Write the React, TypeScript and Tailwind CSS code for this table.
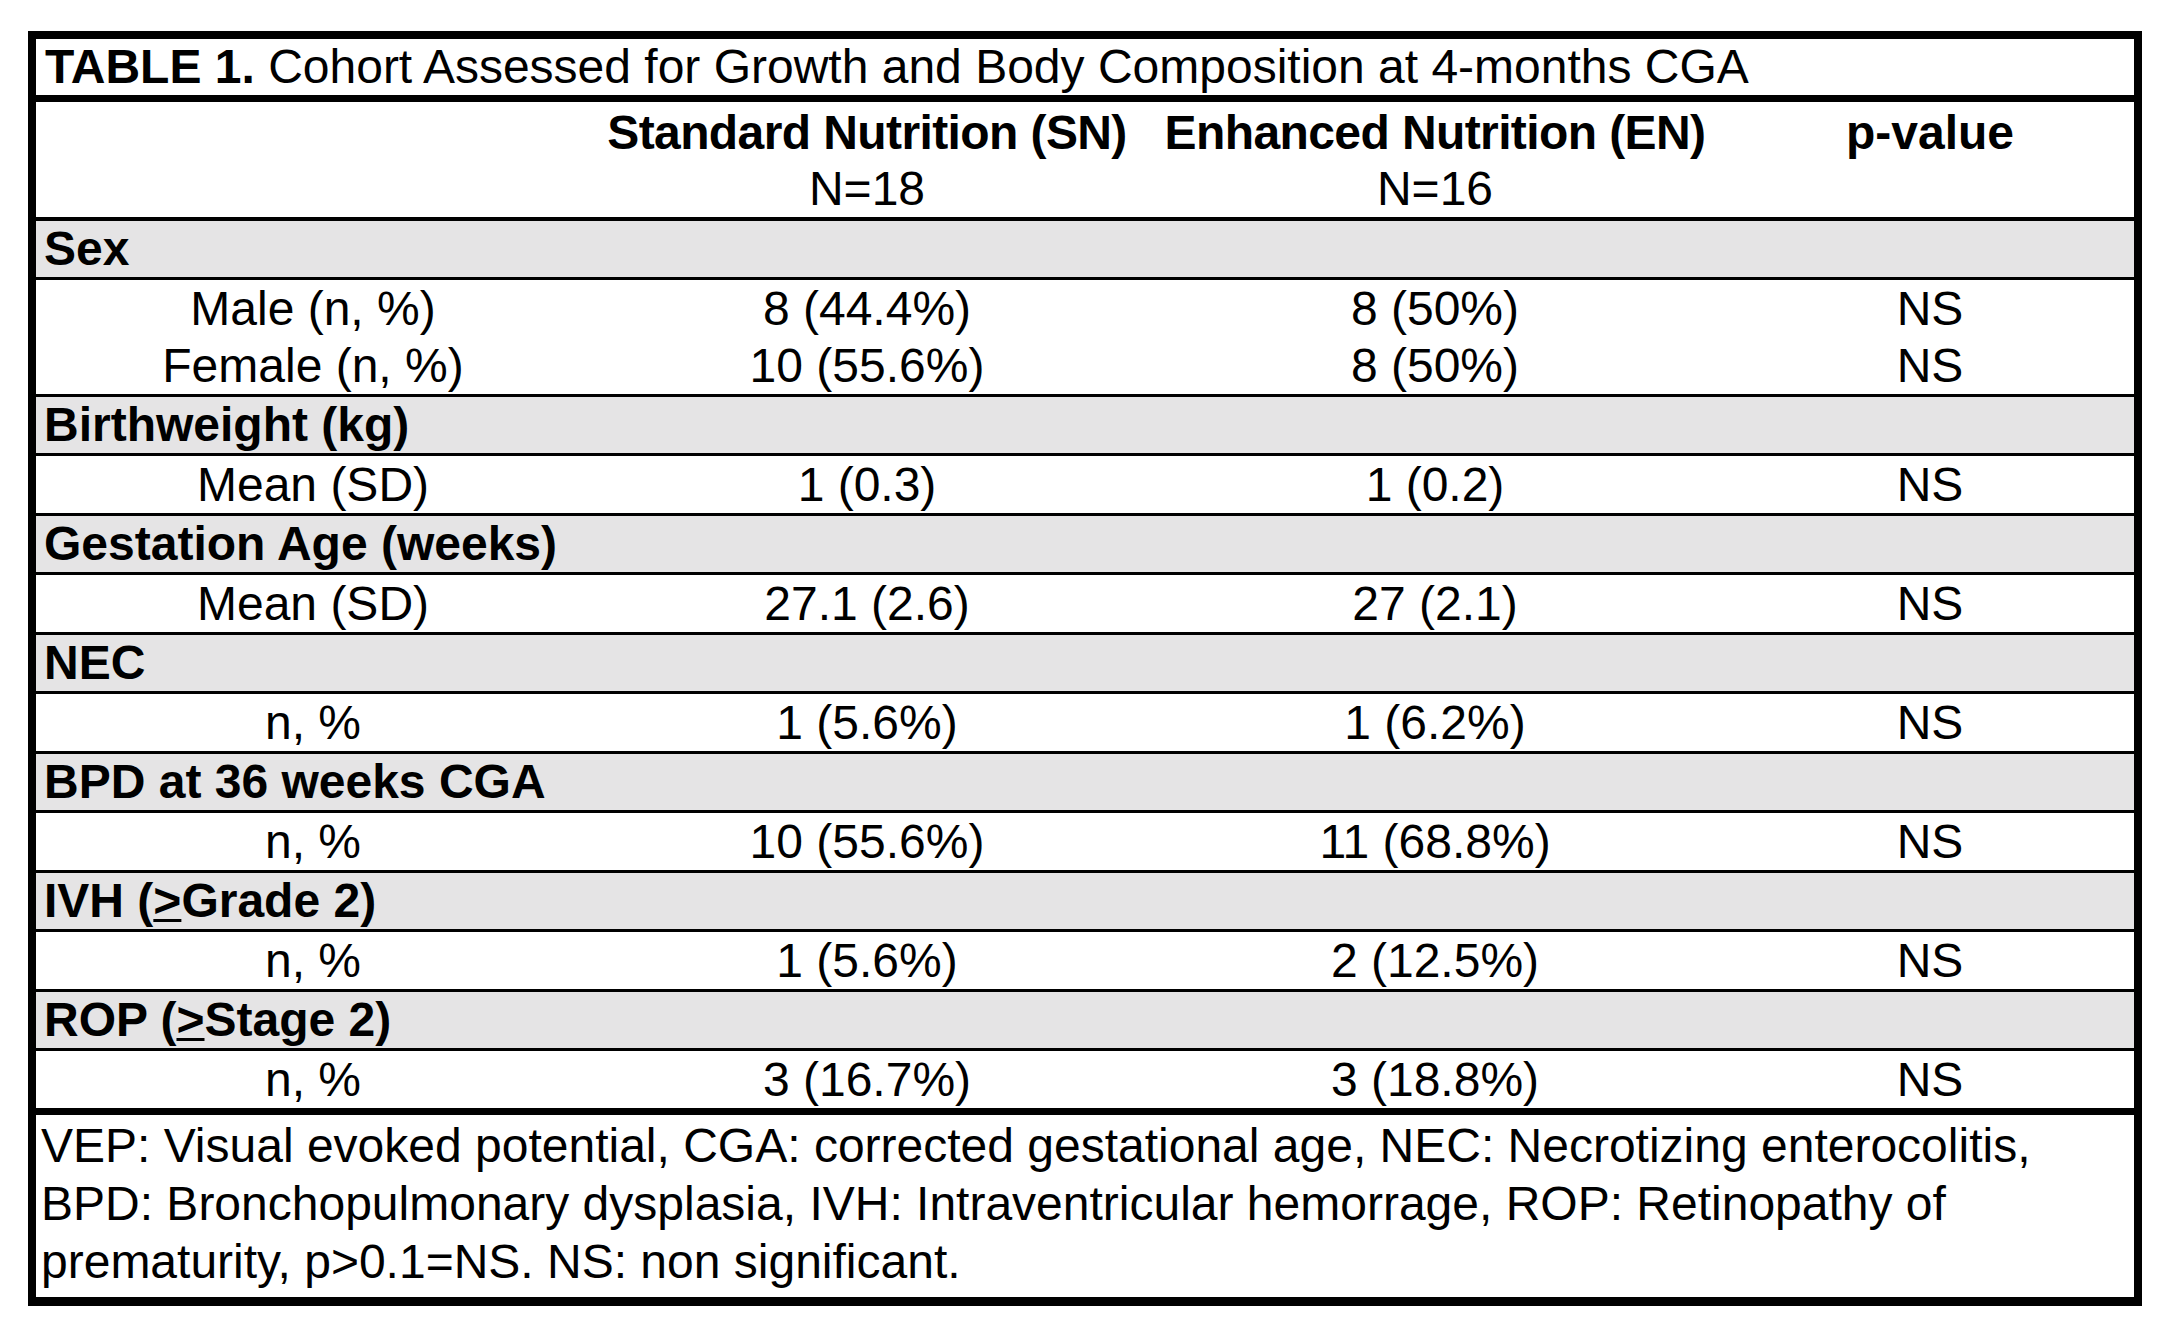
type Row = [string, string, string, string];

type Section = {
  title: React.ReactNode;
  rows: Row[];
};

const sections: Section[] = [
  {
    title: "Sex",
    rows: [
      ["Male (n, %)", "8 (44.4%)", "8 (50%)", "NS"],
      ["Female (n, %)", "10 (55.6%)", "8 (50%)", "NS"],
    ],
  },
  { title: "Birthweight (kg)", rows: [["Mean (SD)", "1 (0.3)", "1 (0.2)", "NS"]] },
  { title: "Gestation Age (weeks)", rows: [["Mean (SD)", "27.1 (2.6)", "27 (2.1)", "NS"]] },
  { title: "NEC", rows: [["n, %", "1 (5.6%)", "1 (6.2%)", "NS"]] },
  { title: "BPD at 36 weeks CGA", rows: [["n, %", "10 (55.6%)", "11 (68.8%)", "NS"]] },
  {
    title: (
      <>
        IVH (<span className="underline decoration-[3px] underline-offset-2">&gt;</span>Grade 2)
      </>
    ),
    rows: [["n, %", "1 (5.6%)", "2 (12.5%)", "NS"]],
  },
  {
    title: (
      <>
        ROP (<span className="underline decoration-[3px] underline-offset-2">&gt;</span>Stage 2)
      </>
    ),
    rows: [["n, %", "3 (16.7%)", "3 (18.8%)", "NS"]],
  },
];

const cols = "grid grid-cols-[554px_554px_582px_408px] text-center";

export default function App() {
  return (
    <div className="w-[2166px] h-[1326px] bg-white pt-[31px] pl-[28px] font-['Liberation_Sans',Arial,sans-serif] text-black text-[48px]">
      <div className="w-[2114px] border-black border-t-8 border-x-8 border-b-[9px]">
        {/* Title */}
        <div className="h-[56px] leading-[56px] pl-[9px] whitespace-nowrap">
          <span className="font-bold">TABLE 1.</span> Cohort Assessed for Growth and Body Composition at 4-months CGA
        </div>

        {/* Column headers */}
        <div className={`${cols} h-[122px] pt-[3px] border-t-[7px] border-black leading-[56px]`}>
          <div></div>
          <div>
            <div className="font-bold whitespace-nowrap tracking-[-0.6px]">Standard Nutrition (SN)</div>
            <div>N=18</div>
          </div>
          <div>
            <div className="font-bold whitespace-nowrap tracking-[-0.6px]">Enhanced Nutrition (EN)</div>
            <div>N=16</div>
          </div>
          <div className="font-bold">p-value</div>
        </div>

        {/* Body */}
        {sections.map((s, i) => (
          <div key={i}>
            <div
              className={`leading-[56px] pl-2 font-bold bg-[#e5e4e5] border-black ${
                i === 0 ? "border-t-4" : "border-t-[3px]"
              }`}
            >
              {s.title}
            </div>
            <div className="border-t-[3px] border-black">
              {s.rows.map((r, j) => (
                <div key={j} className={`${cols} h-[57px] leading-[57px] whitespace-nowrap`}>
                  <div>{r[0]}</div>
                  <div>{r[1]}</div>
                  <div>{r[2]}</div>
                  <div>{r[3]}</div>
                </div>
              ))}
            </div>
          </div>
        ))}

        {/* Footnote */}
        <div className="h-[189px] border-t-[7px] border-black pl-[5px] pt-[2px] leading-[58px]">
          VEP: Visual evoked potential, CGA: corrected gestational age, NEC: Necrotizing enterocolitis,
          <br />
          BPD: Bronchopulmonary dysplasia, IVH: Intraventricular hemorrage, ROP: Retinopathy of
          <br />
          prematurity, p&gt;0.1=NS. NS: non significant.
        </div>
      </div>
    </div>
  );
}
